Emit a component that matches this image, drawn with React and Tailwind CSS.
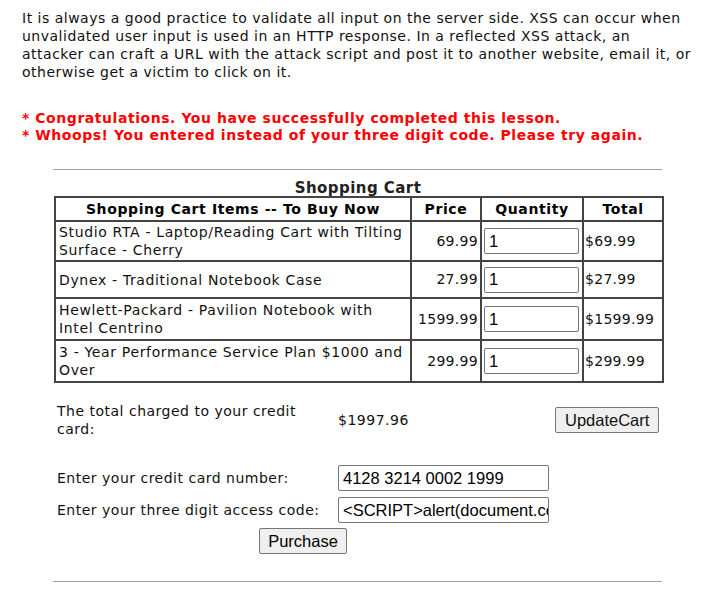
export default function App() {
  const rows = [
    { name: "Studio RTA - Laptop/Reading Cart with Tilting Surface - Cherry", price: "69.99", total: "$69.99", h: "h-[40px]" },
    { name: "Dynex - Traditional Notebook Case", price: "27.99", total: "$27.99", h: "h-[37px]" },
    { name: "Hewlett-Packard - Pavilion Notebook with Intel Centrino", price: "1599.99", total: "$1599.99", h: "h-[42px]" },
    { name: "3 - Year Performance Service Plan $1000 and Over", price: "299.99", total: "$299.99", h: "h-[42px]" },
  ];
  const verdana = "font-['DejaVu_Sans',Verdana,sans-serif]";
  const arial = "font-['Liberation_Sans',Arial,sans-serif]";
  const inputCls = `h-[26px] border border-[#767676] rounded-[2px] pl-[4px] text-[16.5px] text-black bg-white outline-none tracking-normal ${arial}`;
  return (
    <div className={`bg-white text-black min-h-[590px] pl-[22px] pr-[17px] pt-[9px] ${verdana} tracking-[0.5px]`}>
      <p className="text-[14px] leading-[18px] text-[#111]">
        It is always a good practice to validate all input on the server side. XSS can occur when unvalidated user input is used in an HTTP response. In a reflected XSS attack, an attacker can craft a URL with the attack script and post it to another website, email it, or otherwise get a victim to click on it.
      </p>
      <div className="mt-[29px] text-[14px] leading-[17px] font-bold text-[#ff0000] tracking-[0.55px]">
        <div>* Congratulations. You have successfully completed this lesson.</div>
        <div>* Whoops! You entered instead of your three digit code. Please try again.</div>
      </div>
      <div className="mt-[25px] ml-[31px] w-[609px] h-[1px] bg-[#a0a0a0]" />
      <div className="ml-[32px] w-[608px] mt-[7px]">
        <div className="text-center font-bold text-[15px] pt-[3px] leading-[16px] text-[#222] tracking-[0.45px]">Shopping Cart</div>
        <table className="w-[608px] border-collapse border-2 border-[#444] text-[14px] table-fixed">
          <colgroup>
            <col className="w-[356px]" />
            <col className="w-[70px]" />
            <col className="w-[102px]" />
            <col className="w-[80px]" />
          </colgroup>
          <thead>
            <tr className="h-[24px]">
              <th className="border-2 border-[#444] font-bold px-1 tracking-[0.6px]">Shopping Cart Items -- To Buy Now</th>
              <th className="border-2 border-[#444] font-bold tracking-[0.6px]">Price</th>
              <th className="border-2 border-[#444] font-bold tracking-[0.6px]">Quantity</th>
              <th className="border-2 border-[#444] font-bold tracking-[0.6px]">Total</th>
            </tr>
          </thead>
          <tbody>
            {rows.map((r) => (
              <tr key={r.name} className={r.h}>
                <td className="border-2 border-[#444] px-[3px] leading-[18px] align-middle text-[#111] tracking-[0.65px]">{r.name}</td>
                <td className="border-2 border-[#444] text-right pr-[2px] text-[#111] tracking-[0.3px]">{r.price}</td>
                <td className="border-2 border-[#444] pl-[2px] pr-[2px]">
                  <input readOnly defaultValue="1" className={`${inputCls} w-[95px] pl-[3px]`} />
                </td>
                <td className="border-2 border-[#444] pl-[1px] text-[#111] whitespace-nowrap tracking-[0.3px]">{r.total}</td>
              </tr>
            ))}
          </tbody>
        </table>
      </div>
      <div className="ml-[35px] mt-[19px] grid grid-cols-[281px_217px_auto] text-[14px] text-[#111]">
        <div className="leading-[18px] pr-[20px]">The total charged to your credit card:</div>
        <div className="self-center">$1997.96</div>
        <div className="self-center">
          <button className={`h-[26px] px-[9px] bg-[#efefef] border border-[#767676] rounded-[2px] text-[16.5px] tracking-normal ${arial}`}>UpdateCart</button>
        </div>
      </div>
      <div className="ml-[35px] mt-[27px] grid grid-cols-[281px_auto] gap-y-[6px] text-[14px] text-[#111] items-center">
        <div>Enter your credit card number:</div>
        <input readOnly defaultValue="4128 3214 0002 1999" className={`${inputCls} w-[211px]`} />
        <div>Enter your three digit access code:</div>
        <input readOnly defaultValue="<SCRIPT>alert(document.cookie)</SCRIPT>" className={`${inputCls} w-[211px]`} />
      </div>
      <div className="ml-[237px] mt-[5px]">
        <button className={`h-[26px] w-[88px] bg-[#efefef] border border-[#767676] rounded-[2px] text-[16.5px] tracking-normal ${arial}`}>Purchase</button>
      </div>
      <div className="mt-[27px] ml-[31px] w-[609px] h-[1px] bg-[#a0a0a0]" />
    </div>
  );
}
